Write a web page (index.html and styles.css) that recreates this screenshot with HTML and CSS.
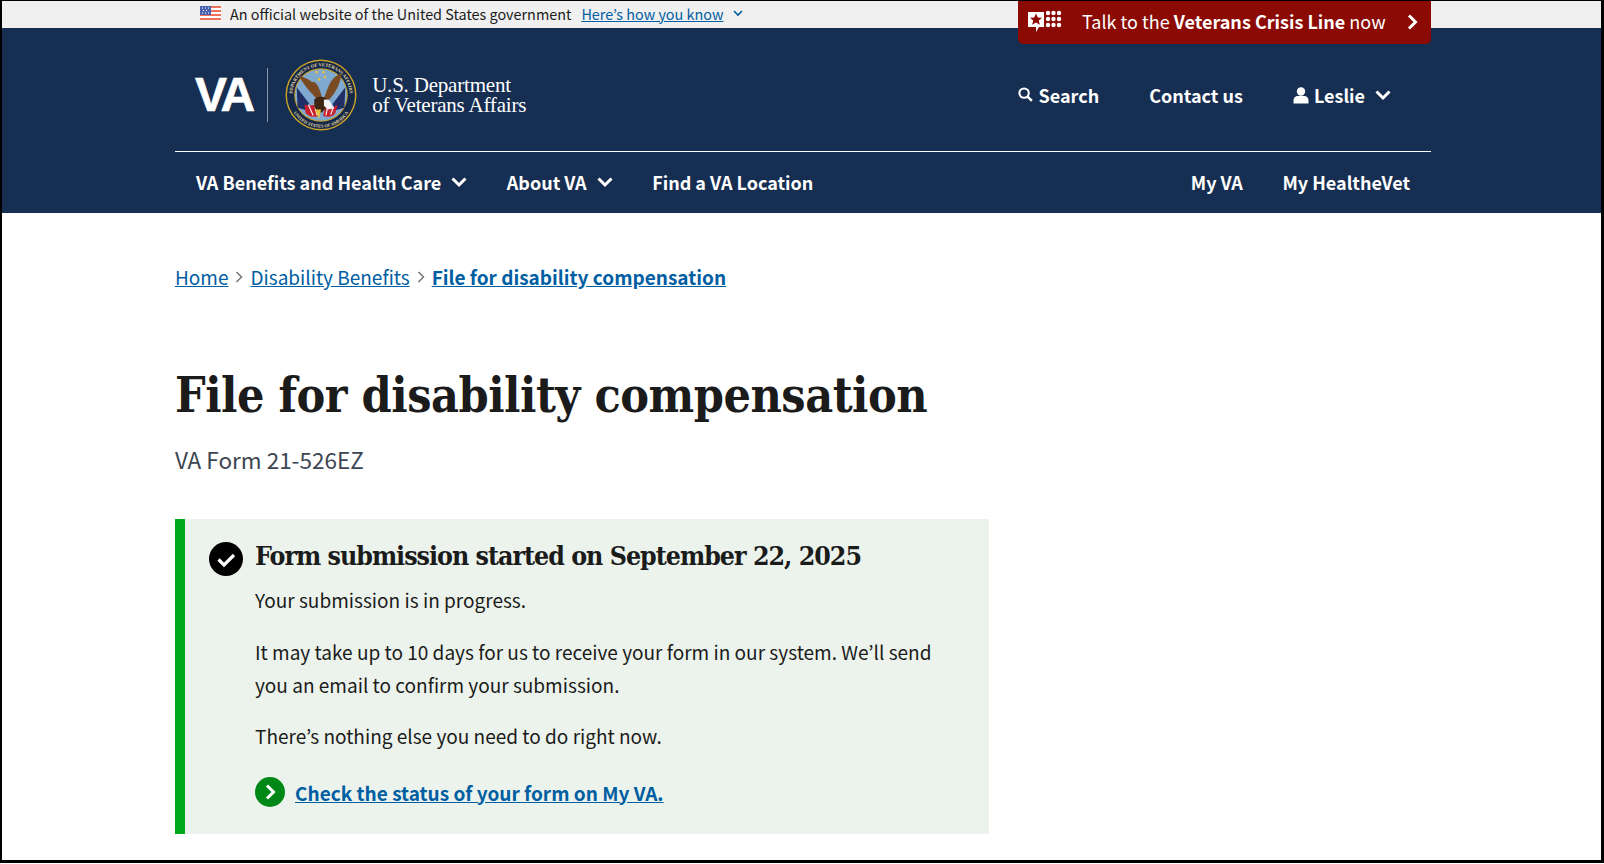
FILE: index.html
```html
<!doctype html>
<html lang="en-US">
<head>
<meta charset="utf-8" />
<meta name="viewport" content="width=device-width" />
<title>File for disability compensation</title>
<link rel="stylesheet" href="styles.css">
</head>
<body>
<div class="page">

<!-- official site banner -->
<div class="gov-bar">
	<svg class="flag" width="21" height="14" viewBox="0 0 21 14">
		<rect width="21" height="14" fill="#fff"/>
		<rect width="21" height="2" fill="#f0705c"/>
		<rect y="4" width="21" height="2" fill="#f0705c"/>
		<rect y="8" width="21" height="2" fill="#f0705c"/>
		<rect y="12" width="21" height="2" fill="#f0705c"/>
		<rect width="11" height="9" fill="#4a62b0"/>
		<path d="M2 2h1M5 2h1M8 2h1M3 4.500h1M6 4.500h1M2 7h1M5 7h1M8 7h1" stroke="#fff" stroke-width="1"/>
	</svg>
	<span class="gov-text">An official website of the United States government</span>
	<a class="gov-link" href="#">Here’s how you know</a>
	<svg class="gov-chevron" width="10" height="7" viewBox="0 0 10 7"><path d="M1 1l4 4 4-4" fill="none" stroke="#005ea2" stroke-width="1.6"/></svg>
</div>

<!-- crisis line sits over the banner and header -->
<a class="crisis" href="#">
	<svg class="crisis-icon" width="36" height="32" viewBox="0 0 36 32">
		<path d="M0 3h16v15h-5l-3 5v-5H0z" fill="#fff"/>
		<path d="M8 4.500l1.800 3.900 4.200.4-3.200 2.800 1 4.100L8 13.500l-3.800 2.200 1-4.100L2 8.800l4.200-.4z" fill="#8b0a03"/>
		<g fill="#fff">
			<circle cx="20" cy="4" r="2.200"/><circle cx="25.500" cy="4" r="2.200"/><circle cx="31" cy="4" r="2.200"/>
			<circle cx="20" cy="10" r="2.200"/><circle cx="25.500" cy="10" r="2.200"/><circle cx="31" cy="10" r="2.200"/>
			<circle cx="20" cy="16" r="2.200"/><circle cx="25.500" cy="16" r="2.200"/><circle cx="31" cy="16" r="2.200"/>
		</g>
	</svg>
	<span class="crisis-text">Talk to the <b>Veterans Crisis Line</b> now</span>
	<svg class="crisis-arrow" width="11" height="16" viewBox="0 0 11 16"><path d="M2 1.5L8.5 8 2 14.5" fill="none" stroke="#fff" stroke-width="3"/></svg>
</a>

<div class="header">
	<div class="wrap">
		<div class="top-row">
			<div class="logo">
				<span class="logo-va">VA</span>
				<span class="logo-rule"></span>
				<svg class="seal" width="72" height="72" viewBox="0 0 74 74">
					<circle cx="37" cy="37" r="36.500" fill="#c9a227"/>
					<circle cx="37" cy="37" r="35" fill="#14284a"/>
					<circle cx="37" cy="37" r="27.500" fill="#c9a227"/>
					<circle cx="37" cy="37" r="26.500" fill="#7fa9cf"/>
					<!-- stars -->
					<g fill="#e3c23c">
						<circle cx="32.500" cy="13.500" r="1.400"/><circle cx="39.500" cy="13.500" r="1.400"/><circle cx="35" cy="21" r="1.400"/><circle cx="41" cy="18.500" r="1.400"/>
					</g>
					<!-- flags -->
					<path d="M12 29l13 17-2 7-10-3z" fill="#1f2f66"/>
					<path d="M62 29L49 46l2 7 10-3z" fill="#1f2f66"/>
					<path d="M20 47c5 1 9 1 12-1l3 12c-6 3-11 1-14-3z" fill="#c8202f"/>
					<path d="M54 47c-4 3-8 3-12 1l-3 10c6 3 11 1 13-3z" fill="#c8202f"/>
					<path d="M24 47l5 11M30 46l3 12M44 49l-2 9M50 49l-3 8" fill="none" stroke="#fff" stroke-width="1.100"/>
					<!-- eagle -->
					<path d="M36 44C30 38 21 30 14 17c6 2 11 4 14 7 2-2 4 1 6 4 2 4 3 8 4 12z" fill="#7a4a22"/>
					<path d="M38 44c4-6 6-18 11-23 2-3 5-4 9-6-1 9-5 19-12 26z" fill="#7a4a22"/>
					<path d="M30 42c2-4 10-4 13-1l1 7-6 7h-4l-4-6z" fill="#3f2612"/>
					<path d="M40 42c3-1 6 0 7 3l3 6-6 1-4-4z" fill="#f4f4f4"/>
					<path d="M31 52h6l-2 10z" fill="#e3c23c"/>
					<!-- ring lettering -->
					<defs>
						<path id="ring-top" d="M9.300 47.100A29.500 29.500 0 1 1 64.700 47.100"/>
						<path id="ring-bot" d="M3.500 37a33.500 33.500 0 0 0 67 0"/>
					</defs>
					<text class="seal-text"><textPath href="#ring-top" startOffset="50%" text-anchor="middle">DEPARTMENT OF VETERANS AFFAIRS</textPath></text>
					<text class="seal-text seal-low"><textPath href="#ring-bot" startOffset="50%" text-anchor="middle">UNITED STATES OF AMERICA</textPath></text>
				</svg>
				<div class="logo-name">U.S. Department<br>of Veterans Affairs</div>
			</div>
			<div class="top-links">
				<a class="nav-link search-link" href="#">
					<svg width="15" height="15" viewBox="0 0 16 16"><circle cx="6.5" cy="6.5" r="5" fill="none" stroke="#fff" stroke-width="2.200"/><path d="M10.200 10.200l4.600 4.600" stroke="#fff" stroke-width="2.600"/></svg>
					Search
				</a>
				<a class="nav-link" href="#">Contact us</a>
				<a class="nav-link user-link" href="#">
					<svg width="16" height="17" viewBox="0 0 16 17"><circle cx="8" cy="4.5" r="4.2" fill="#fff"/><path d="M0.5 16.5v-3c0-3 2-4.5 4-4.5h7c2 0 4 1.500 4 4.500v3z" fill="#fff"/></svg>
					Leslie
					<svg class="chev" width="16" height="11" viewBox="0 0 16 11"><path d="M1.500 1.500l6.500 6.500 6.500-6.500" fill="none" stroke="#fff" stroke-width="3"/></svg>
				</a>
			</div>
		</div>
		<div class="nav-row">
			<a class="nav-link" href="#">VA Benefits and Health Care <svg class="chev" width="16" height="11" viewBox="0 0 16 11"><path d="M1.500 1.500l6.500 6.500 6.500-6.500" fill="none" stroke="#fff" stroke-width="3"/></svg></a>
			<a class="nav-link" href="#">About VA <svg class="chev" width="16" height="11" viewBox="0 0 16 11"><path d="M1.500 1.500l6.500 6.500 6.500-6.500" fill="none" stroke="#fff" stroke-width="3"/></svg></a>
			<a class="nav-link" href="#">Find a VA Location</a>
			<a class="nav-link nav-right" href="#">My VA</a>
			<a class="nav-link" href="#">My HealtheVet</a>
		</div>
	</div>
</div>

<div class="wrap content">
	<div class="crumbs">
		<a href="#">Home</a>
		<svg width="8" height="12" viewBox="0 0 8 12"><path d="M1.500 1l5 5-5 5" fill="none" stroke="#71767a" stroke-width="1.500"/></svg>
		<a href="#">Disability Benefits</a>
		<svg width="8" height="12" viewBox="0 0 8 12"><path d="M1.500 1l5 5-5 5" fill="none" stroke="#71767a" stroke-width="1.500"/></svg>
		<a class="current" href="#">File for disability compensation</a>
	</div>

	<h1>File for disability compensation</h1>
	<p class="form-no">VA Form 21-526EZ</p>

	<div class="alert">
		<svg class="alert-icon" width="34" height="34" viewBox="0 0 34 34"><circle cx="17" cy="17" r="17" fill="#000"/><path d="M9.500 17.500l5.500 5.500 10-10" fill="none" stroke="#fff" stroke-width="3.200"/></svg>
		<div class="alert-body">
			<h2>Form submission started on September 22, 2025</h2>
			<p class="first">Your submission is in progress.</p>
			<p>It may take up to 10 days for us to receive your form in our system. We’ll send you an email to confirm your submission.</p>
			<p class="last">There’s nothing else you need to do right now.</p>
			<div class="action">
				<svg width="30" height="30" viewBox="0 0 30 30"><circle cx="15" cy="15" r="15" fill="#008817"/><path d="M12 8.500l6.500 6.500-6.500 6.500" fill="none" stroke="#fff" stroke-width="3"/></svg>
				<a href="#">Check the status of your form on My VA.</a>
			</div>
		</div>
	</div>
</div>

</div>
</body>
</html>
```

FILE: styles.css
```css
* {
	box-sizing: border-box;
}
html {
	background-color: #ffffff;
}
html, body {
	margin: 0;
}
body {
	height: 863px;
	padding: 1px 3px 0 2px;
	background-color: #000000;
	font-family: "Noto Sans CJK KR", "Noto Sans", sans-serif;
	color: #1b1b1b;
}
a {
	color: #005ea2;
}
.page {
	position: relative;
	height: 859px;
	overflow: hidden;
	background-color: #ffffff;
}
.wrap {
	width: 1256px;
	margin-left: 173px;
}

/* banner */
.gov-bar {
	display: flex;
	align-items: center;
	height: 27px;
	padding: 0 0 3px 198px;
	background-color: #f0f0f0;
	font-size: 14.4px;
}
.gov-text {
	margin-left: 9px;
}
.gov-link {
	margin-left: 10px;
}
.gov-chevron {
	margin-left: 10px;
}

/* crisis line */
.crisis {
	position: absolute;
	top: 0;
	left: 1016px;
	width: 413px;
	height: 43px;
	display: flex;
	align-items: center;
	padding: 0 13px 0 10px;
	background-color: #8b0a03;
	border-radius: 0 0 5px 5px;
	color: #ffffff;
	font-size: 18px;
	text-decoration: none;
}
.crisis-icon {
	margin-top: 4px;
}
.crisis-text {
	margin-left: 18px;
	padding-bottom: 3px;
	flex: 1;
}
.crisis-arrow {
	margin-bottom: 2px;
}

/* header */
.header {
	background-color: #162e51;
	height: 185px;
}
.top-row {
	display: flex;
	align-items: center;
	justify-content: space-between;
	height: 124px;
	padding: 10px 0 0 20px;
	border-bottom: 1px solid #ffffff;
}
.logo {
	display: flex;
	align-items: center;
}
.logo-va {
	font-family: "Liberation Sans", sans-serif;
	font-size: 48px;
	font-weight: bold;
	letter-spacing: -3px;
	color: #ffffff;
	-webkit-text-stroke: 0.6px #ffffff;
}
.logo-rule {
	width: 1px;
	height: 54px;
	margin-left: 15px;
	background-color: #8a97a8;
}
.seal {
	margin-left: 17px;
}
.seal-text {
	font-family: "Liberation Serif", serif;
	font-size: 4.8px;
	font-weight: bold;
	fill: #e8d9a0;
}
.seal-low {
	font-size: 4.6px;
}
.logo-name {
	margin-left: 15px;
	font-family: "Liberation Serif", serif;
	font-size: 21px;
	line-height: 20px;
	letter-spacing: -0.2px;
	color: #ffffff;
}
.top-links {
	display: flex;
	align-items: center;
	gap: 50px;
	padding-right: 40px;
}
.nav-link {
	display: flex;
	align-items: center;
	gap: 5px;
	color: #ffffff;
	font-size: 18px;
	font-weight: bold;
	text-decoration: none;
}
.nav-link .chev {
	margin-left: 5px;
}
.user-link svg {
	margin-top: 2px;
}
.nav-row {
	display: flex;
	align-items: center;
	gap: 39.5px;
	height: 60px;
	padding: 0 21px 0 21px;
}
.nav-right {
	margin-left: auto;
}

/* main content */
.content {
	padding-top: 48px;
}
.crumbs {
	display: flex;
	align-items: center;
	gap: 7px;
	font-size: 19px;
	line-height: 32px;
}
.crumbs .current {
	font-weight: bold;
}
h1 {
	margin: 69px 0 0;
	font-family: "DejaVu Serif Condensed", "DejaVu Serif", serif;
	font-stretch: condensed;
	font-size: 48px;
	line-height: 66px;
	font-weight: bold;
	letter-spacing: -0.5px;
}
.form-no {
	margin: 15px 0 0;
	font-size: 22.5px;
	line-height: 32px;
	color: #3d4551;
}
.alert {
	display: flex;
	width: 814px;
	height: 315px;
	margin-top: 44px;
	padding: 23px 24px 0 24px;
	background-color: #ecf3ec;
	border-left: 10px solid #00a91c;
}
.alert-icon {
	flex: none;
	margin-right: 12px;
}
h2 {
	margin: 0;
	font-family: "DejaVu Serif Condensed", "DejaVu Serif", serif;
	font-stretch: condensed;
	font-size: 26.5px;
	line-height: 28px;
	font-weight: bold;
	letter-spacing: -1px;
}
.alert-body p {
	margin: 19px 0 0;
	font-size: 19.05px;
	line-height: 33px;
}
.alert-body p.first {
	margin-top: 13px;
}
.alert-body p.last {
	margin-top: 18px;
}
.action {
	display: flex;
	align-items: center;
	gap: 10px;
	margin-top: 25px;
	font-size: 19.05px;
	font-weight: bold;
}
```
